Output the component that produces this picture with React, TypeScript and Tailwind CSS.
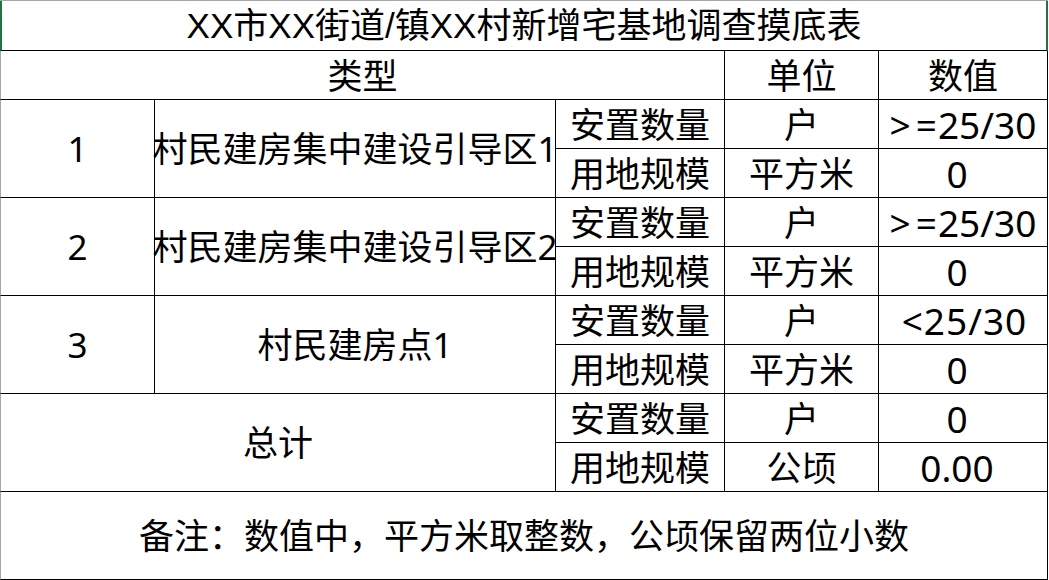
import React from 'react';

const cell = 'flex items-center justify-center whitespace-nowrap border-r border-b border-black';

// numbers in the value column sit a little larger, like the sheet's latin face
const Value = ({ v }: { v: string }) => {
  if (v.startsWith('>=')) {
    return (
      <div className={`${cell} text-[37px]`}>
        <span className="mr-[5px]">&gt;</span>
        <span className="mr-[1px]">=</span>
        {v.slice(2)}
      </div>
    );
  }
  if (v.startsWith('<')) {
    return <div className={`${cell} text-[37px] tracking-[1px] pl-[3px]`}>{v}</div>;
  }
  return <div className={`${cell} text-[37px] pr-[12px]`}>{v}</div>;
};

const Row = ({ item, unit, value }: { item: string; unit: string; value: string }) => (
  <>
    <div className={cell}>{item}</div>
    <div className={cell}>{unit}</div>
    <Value v={value} />
  </>
);

export default function App() {
  const groups = [
    { no: '1', name: '村民建房集中建设引导区1', count: '>=25/30' },
    { no: '2', name: '村民建房集中建设引导区2', count: '>=25/30' },
    { no: '3', name: '村民建房点1', count: '<25/30' },
  ];

  return (
    <div
      className="w-[1049px] h-[580px] bg-white text-black text-[35px] leading-none overflow-hidden"
      style={{ fontFamily: '"Noto Sans", "Noto Sans CJK SC", sans-serif' }}
    >
      <div className="grid grid-cols-[155px_401px_169px_154px_169px] grid-rows-[50px_repeat(9,49px)_88px] border-t border-[#a6a6a6] w-[1048px]">
        {/* title */}
        <div
          className="col-span-5 flex items-center justify-center whitespace-nowrap border-l-2 border-r-2 border-l-[#217346] border-r-[#217346] border-b border-b-black"
          style={{ fontFamily: '"Liberation Sans", "Noto Sans CJK SC", sans-serif' }}
        >
          XX市XX街道/镇XX村新增宅基地调查摸底表
        </div>

        {/* header */}
        <div className={`${cell} col-span-3 border-l border-l-[#a6a6a6]`}>类型</div>
        <div className={cell}>单位</div>
        <div className={cell}>数值</div>

        {groups.map((g) => (
          <React.Fragment key={g.no}>
            <div className={`${cell} row-span-2 border-l border-l-[#a6a6a6]`}>{g.no}</div>
            <div className={`${cell} row-span-2`}>{g.name}</div>
            <Row item="安置数量" unit="户" value={g.count} />
            <Row item="用地规模" unit="平方米" value="0" />
          </React.Fragment>
        ))}

        {/* totals */}
        <div className={`${cell} col-span-2 row-span-2 border-l border-l-[#a6a6a6]`}>总计</div>
        <Row item="安置数量" unit="户" value="0" />
        <Row item="用地规模" unit="公顷" value="0.00" />

        {/* remarks */}
        <div className={`${cell} col-span-5 border-l border-l-[#a6a6a6]`}>
          备注：数值中，平方米取整数，公顷保留两位小数
        </div>
      </div>
    </div>
  );
}
